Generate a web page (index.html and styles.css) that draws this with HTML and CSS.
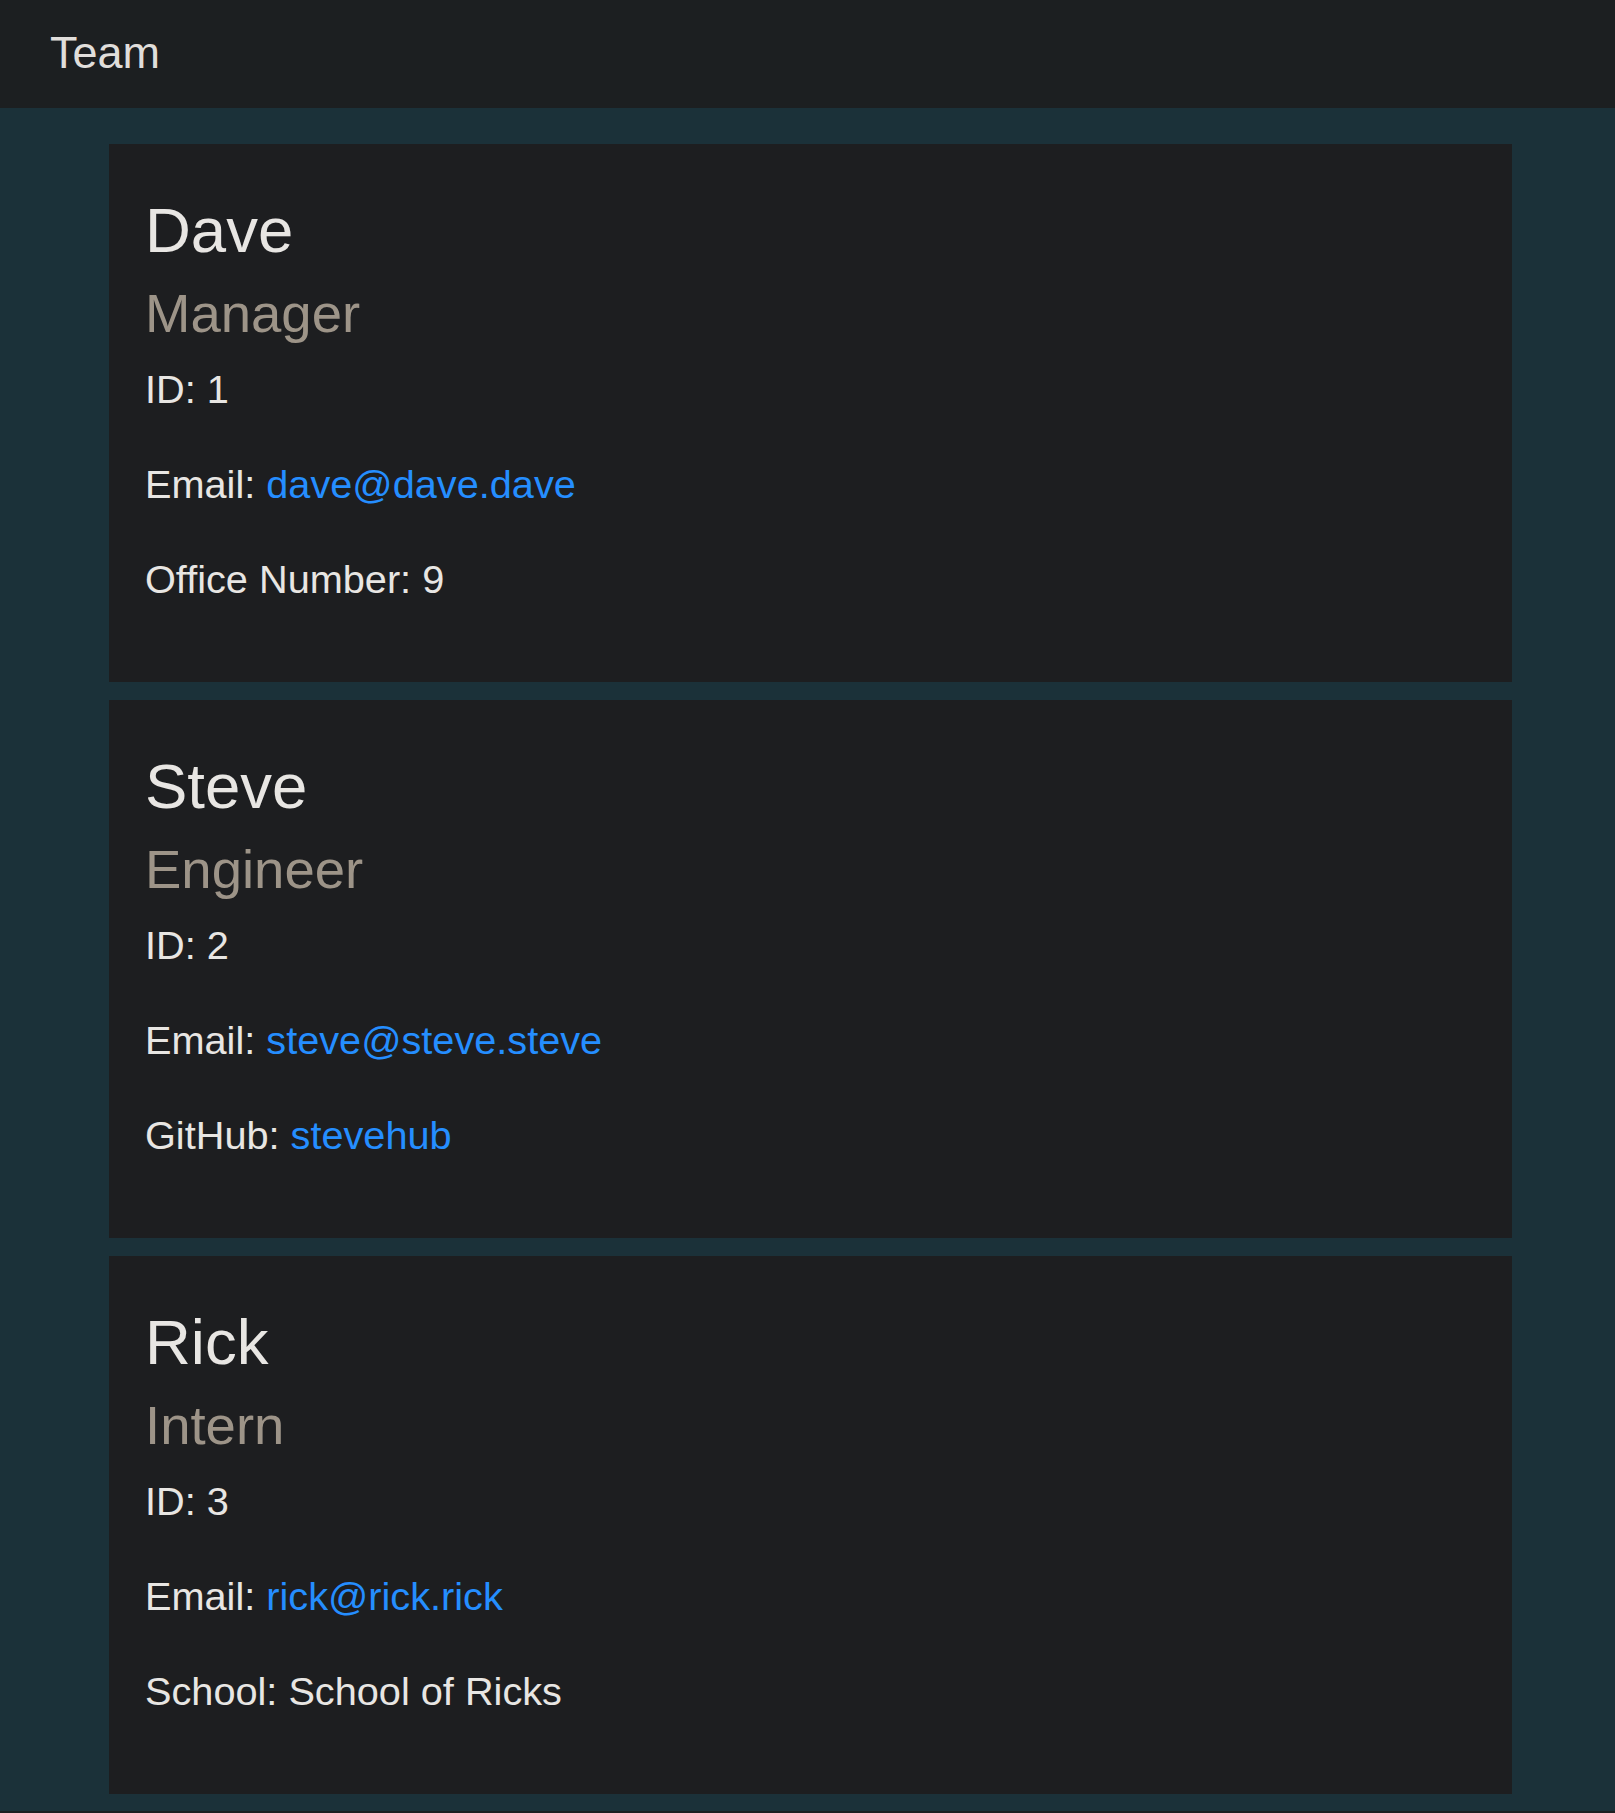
FILE: index.html
```html
<!DOCTYPE html>
<html lang="en">
<head>
<meta charset="utf-8">
<title>Team</title>
<link rel="stylesheet" href="styles.css">
</head>
<body>
<header class="topbar">
  <span class="brand">Team</span>
</header>
<main class="team">
  <section class="card">
    <h2 class="name">Dave</h2>
    <h3 class="role">Manager</h3>
    <p class="field">ID: 1</p>
    <p class="field">Email: <a class="link" href="#">dave@dave.dave</a></p>
    <p class="field">Office Number: 9</p>
  </section>
  <section class="card">
    <h2 class="name">Steve</h2>
    <h3 class="role">Engineer</h3>
    <p class="field">ID: 2</p>
    <p class="field">Email: <a class="link" href="#">steve@steve.steve</a></p>
    <p class="field">GitHub: <a class="link" href="#">stevehub</a></p>
  </section>
  <section class="card">
    <h2 class="name">Rick</h2>
    <h3 class="role">Intern</h3>
    <p class="field">ID: 3</p>
    <p class="field">Email: <a class="link" href="#">rick@rick.rick</a></p>
    <p class="field">School: School of Ricks</p>
  </section>
</main>
<footer class="bottombar"></footer>
</body>
</html>
```

FILE: styles.css
```css
html, body {
  margin: 0;
  padding: 0;
}
body {
  background: #1b3139;
  color: #e8e6e3;
  font-family: "Liberation Sans", Arial, sans-serif;
}
.topbar {
  background: #1c1f21;
  height: 108px;
  display: flex;
  align-items: center;
  padding-left: 50px;
  box-sizing: border-box;
}
.brand {
  font-size: 45px;
  line-height: 1;
  color: #e0dedb;
  position: relative;
  top: -2px;
}
.team {
  padding: 36px 0 17px 109px;
  display: flex;
  flex-direction: column;
  gap: 18px;
}
.card {
  width: 1403px;
  height: 538px;
  box-sizing: border-box;
  background: #1d1e20;
  padding: 47.5px 36px 0;
}
.name {
  margin: 0;
  font-size: 63.5px;
  font-weight: 400;
  line-height: 76.8px;
  color: #e8e6e3;
}
.role {
  margin: 12.6px 0 0;
  font-size: 54.5px;
  font-weight: 400;
  line-height: 65.4px;
  color: #9d9488;
}
.field {
  margin: 35px 0 0;
  font-size: 39.7px;
  line-height: 60px;
}
.role + .field {
  margin-top: 12.9px;
}
.link {
  color: #258eff;
  text-decoration: none;
}
.bottombar {
  background: #1c1f21;
  height: 20px;
}
```
